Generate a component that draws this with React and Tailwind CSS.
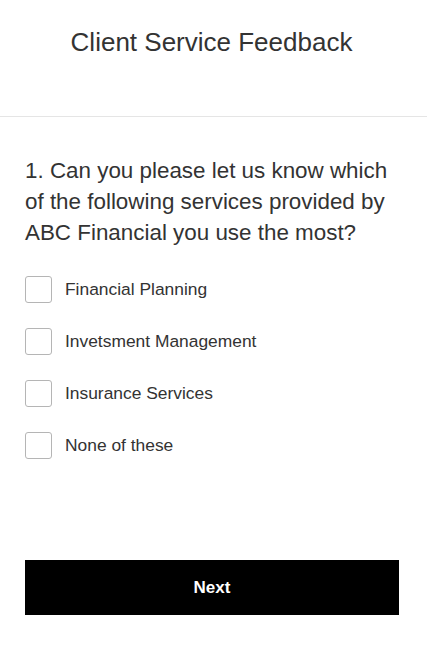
export default function App() {
  const options = [
    "Financial Planning",
    "Invetsment Management",
    "Insurance Services",
    "None of these",
  ];
  return (
    <div className="w-[427px] h-[653px] bg-white text-[#333333] font-['Liberation_Sans',Arial,sans-serif]">
      <div className="h-[117px] border-b border-[#e5e5e5] flex justify-center pt-[25px]">
        <h1 className="text-[26px] leading-[34px] -ml-[4px]">Client Service Feedback</h1>
      </div>
      <div className="pl-[25px] pr-[28px]">
        <p className="mt-[38px] text-[22.4px] leading-[31px]">
          1. Can you please let us know which of the following services provided by ABC Financial you use the most?
        </p>
        <div className="mt-[28px] flex flex-col gap-[25px]">
          {options.map((o) => (
            <label key={o} className="flex items-center gap-[13px] h-[27px]">
              <span className="w-[27px] h-[27px] border border-[#b5b5b5] rounded-[3px] bg-white shrink-0" />
              <span className="text-[17.4px]">{o}</span>
            </label>
          ))}
        </div>
        <button className="mt-[101px] w-full h-[55px] bg-black text-white text-[17px] font-bold">
          Next
        </button>
      </div>
    </div>
  );
}
